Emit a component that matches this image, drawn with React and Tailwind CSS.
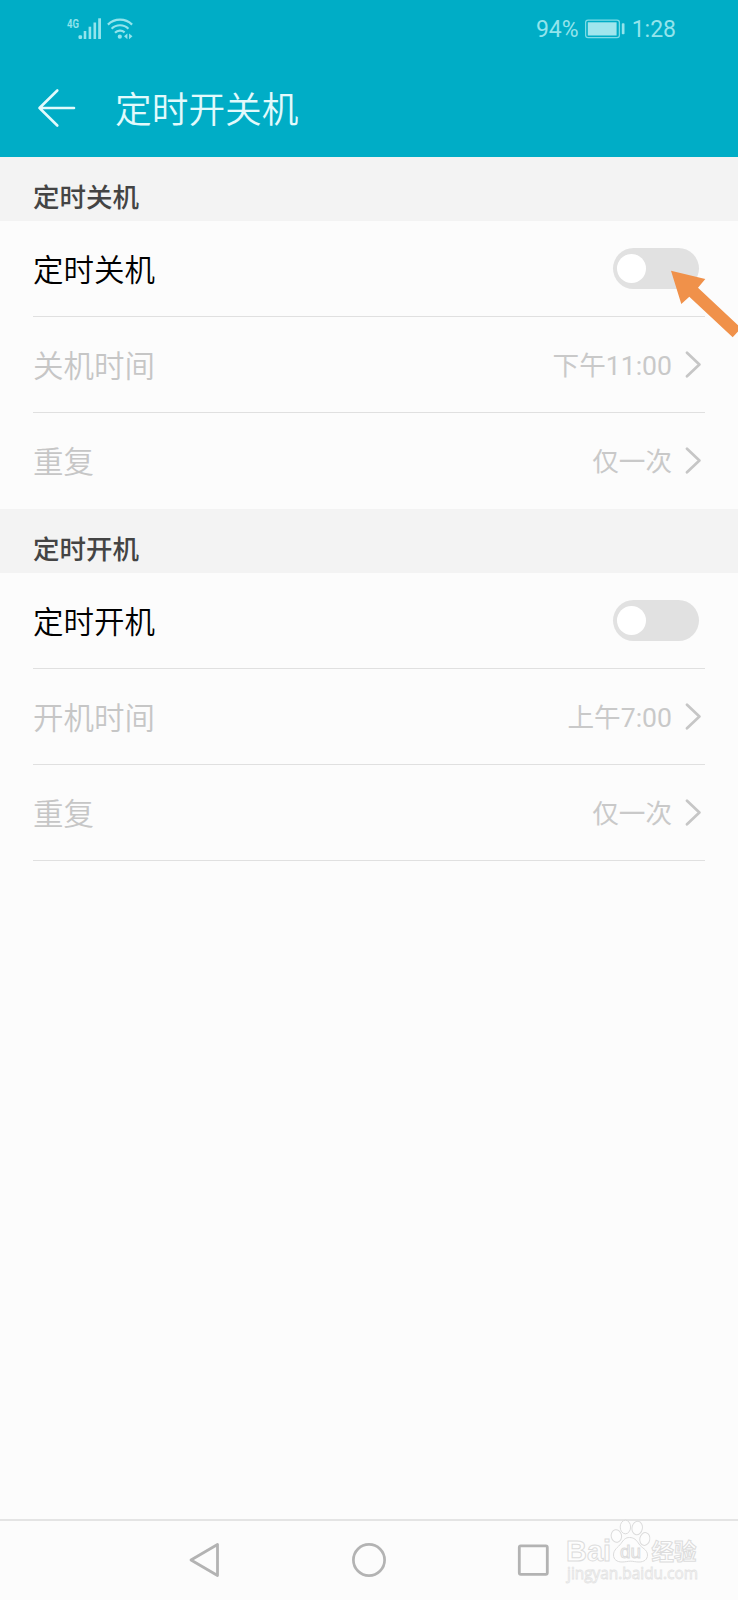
import React, { useState } from 'react';

const SECTIONS = [
    {
        title: '定时关机',
        rows: [
            { label: '定时关机', toggle: true },
            { label: '关机时间', value: '下午11:00' },
            { label: '重复', value: '仅一次', last: true },
        ],
    },
    {
        title: '定时开机',
        rows: [
            { label: '定时开机', toggle: true },
            { label: '开机时间', value: '上午7:00' },
            { label: '重复', value: '仅一次' },
        ],
    },
];

function SignalIcon() {
    return (
        <svg width="38" height="30" viewBox="64 14 38 30" fill="#93e4ec">
            <text x="67" y="28" fontSize="13.5" fontWeight="600" fontFamily="Roboto, sans-serif" textLength="12" lengthAdjust="spacingAndGlyphs">4G</text>
            <rect x="78.5" y="35.3" width="3.6" height="3.7" rx="1.2" />
            <rect x="83.7" y="31" width="2.6" height="8" />
            <rect x="88.6" y="26.7" width="2.6" height="12.3" />
            <rect x="93.5" y="22.5" width="2.6" height="16.5" />
            <rect x="98.2" y="18.3" width="2.8" height="20.7" />
        </svg>
    );
}

function WifiIcon() {
    return (
        <svg width="28" height="24" viewBox="106 17 28 24" fill="none" stroke="#93e4ec" strokeWidth="2.2">
            <path d="M107.9 24.6a17.3 17.3 0 0 1 24.2 0" />
            <path d="M111.6 28.7a12 12 0 0 1 16.8 0" />
            <path d="M115 32.7a7.2 7.2 0 0 1 9.6 -.4" />
            <circle cx="119.8" cy="36.7" r="2.1" fill="#93e4ec" stroke="none" />
            <path d="M127.4 33.4v5.8l-3.4-2.9zM129.1 33.4v5.8l3.4-2.9z" fill="#93e4ec" stroke="none" />
        </svg>
    );
}

function BatteryIcon() {
    return (
        <svg width="40" height="20" viewBox="585 19.5 40 20">
            <rect x="585.6" y="20.6" width="33.8" height="17.6" rx="2.4" fill="none" stroke="#7cdbe5" strokeWidth="1.3" />
            <rect x="587.8" y="22.8" width="28.8" height="13.2" fill="#a0e6ed" />
            <rect x="621.8" y="23.7" width="2.7" height="11" rx="0.8" fill="#93e4ec" />
        </svg>
    );
}

function StatusBar() {
    return (
        <div className="flex h-[58px] items-center pl-16 pr-[62px] font-[Roboto,sans-serif] text-[23px] text-[#93e4ec]">
            <SignalIcon />
            <div className="ml-1">
                <WifiIcon />
            </div>
            <div className="ml-auto flex items-center">
                <span className="pt-0.5">94%</span>
                <div className="ml-1.5 mr-[7px]">
                    <BatteryIcon />
                </div>
                <span className="pt-0.5">1:28</span>
            </div>
        </div>
    );
}

function Toggle({ on, onClick }) {
    return (
        <button
            type="button"
            role="switch"
            aria-checked={on}
            onClick={onClick}
            className={`mr-1.5 flex h-[41px] w-[86px] items-center rounded-full px-1 ${on ? 'justify-end bg-[#00adc6]' : 'bg-[#e1e1e1]'}`}
        >
            <span className="size-[29px] rounded-full bg-white" />
        </button>
    );
}

function Chevron() {
    return (
        <svg className="mb-px ml-[13px] mr-1" width="16" height="27" viewBox="0 0 16 27" fill="none" stroke="#c6c6c6" strokeWidth="2.7" strokeLinecap="round" strokeLinejoin="round">
            <path d="M2 1.8L14.4 13.5L2 25.2" />
        </svg>
    );
}

function Row({ label, value, toggle, last }) {
    const [on, setOn] = useState(false);
    return (
        <div className={`mx-[33px] flex h-24 items-center justify-between border-b ${last ? 'border-transparent' : 'border-[#e0e0e0]'}`}>
            <span className={`pt-[5px] text-[30.5px] font-[350] leading-none ${toggle ? 'text-black' : 'text-[#c6c6c6]'}`}>{label}</span>
            {toggle ? (
                <Toggle on={on} onClick={() => setOn(!on)} />
            ) : (
                <div className="flex items-center text-[26.6px] leading-none text-[#c9c9c9]">
                    <span className="pt-[3px]">{value}</span>
                    <Chevron />
                </div>
            )}
        </div>
    );
}

function Section({ title, rows }) {
    return (
        <section>
            <h2 className="flex h-16 items-center bg-[#f3f3f3] pl-[33px] pt-[19px] text-[26.5px] font-medium leading-none text-[#444444]">{title}</h2>
            {rows.map((row) => (
                <Row key={row.label} {...row} />
            ))}
        </section>
    );
}

// Orange hint arrow lying over the first switch
function PointerArrow() {
    return (
        <svg className="pointer-events-none absolute right-0 top-[270px]" width="67" height="69" viewBox="0 0 67 69">
            <path d="M0 .7L34.3 9L27 17.7L67 55.2V61.5L61.7 67.3L18.3 26.7L10.3 34Z" fill="#f0914a" />
        </svg>
    );
}

function Watermark() {
    return (
        <svg className="pointer-events-none absolute bottom-0 right-[34px]" width="140" height="82" viewBox="564 1518 140 82" fill="#fdfdfd" stroke="#dcdcdc" strokeWidth="1">
            <text x="566" y="1560.5" fontSize="29" fontWeight="700" fontFamily="'Liberation Sans', sans-serif" textLength="45" lengthAdjust="spacingAndGlyphs">Bai</text>
            <ellipse cx="625.4" cy="1527" rx="5.2" ry="6.8" />
            <ellipse cx="637.2" cy="1528" rx="5.2" ry="6.8" transform="rotate(10 637.2 1528)" />
            <ellipse cx="616.4" cy="1536" rx="5.2" ry="6.3" transform="rotate(-12 616.4 1536)" />
            <ellipse cx="644.8" cy="1539" rx="5" ry="6.5" transform="rotate(12 644.8 1539)" />
            <path d="M629.5 1537.5c4.5 0 7 2.5 9.5 6.5c2.5 4 8.5 5.5 8.5 11c0 4.5-3.5 7-8.5 7c-3.5 0-5.5-.8-8.5-.8s-5 .8-8.5 .8c-5 0-8.500-2.500-8.500-7c0-5.500 4.500-7.500 7.500-11.500c2.700-3.800 4.500-6 8.500-6z" />
            <text x="620" y="1558" fontSize="18.5" fontFamily="'Liberation Sans', sans-serif" textLength="21" lengthAdjust="spacingAndGlyphs">du</text>
            <text x="651.5" y="1559.5" fontSize="22.5" fontWeight="700" fontFamily="'Noto Sans CJK SC', sans-serif">经验</text>
            <text x="567" y="1578.5" fontSize="16" fontFamily="'Open Sans', sans-serif" textLength="131" lengthAdjust="spacingAndGlyphs" stroke="#e3e3e3" strokeWidth="0.8">jingyan.baidu.com</text>
        </svg>
    );
}

function NavBar() {
    return (
        <nav className="mt-auto grid h-[81px] grid-cols-3 place-items-center border-t-2 border-[#e4e4e4] px-[122px] pb-0.5">
            <svg width="34" height="36" viewBox="0 0 34 36" fill="none" stroke="#b3b3b3" strokeWidth="2.8" strokeLinejoin="round">
                <path d="M30.5 2.5V33.5L4 18Z" />
            </svg>
            <svg width="36" height="36" viewBox="0 0 36 36" fill="none" stroke="#b3b3b3" strokeWidth="2.7">
                <circle cx="18" cy="18" r="15.6" />
            </svg>
            <svg width="36" height="36" viewBox="0 0 36 36" fill="none" stroke="#b3b3b3" strokeWidth="2.8">
                <rect x="3.3" y="3.8" width="28" height="28.5" rx="1.5" />
            </svg>
        </nav>
    );
}

function App() {
    return (
        <div className="relative flex h-[1600px] w-[738px] flex-col overflow-hidden bg-[#fcfcfc] font-[Roboto,'Noto_Sans_CJK_SC',sans-serif]">
            <header className="h-[157px] bg-[#00adc6]">
                <StatusBar />
                <div className="flex h-[99px] items-center pl-[37px]">
                    <svg width="40" height="40" viewBox="0 0 40 40" fill="none" stroke="#e2fafc" strokeWidth="2.6" strokeLinecap="round" strokeLinejoin="round">
                        <path d="M20.3 2.5L2.5 20L20.3 37.5M2.5 20H37" />
                    </svg>
                    <h1 className="ml-[38px] pt-2 text-[36.7px] font-[350] leading-none text-[#e2fafc]">定时开关机</h1>
                </div>
            </header>
            <main>
                {SECTIONS.map((section) => (
                    <Section key={section.title} {...section} />
                ))}
            </main>
            <NavBar />
            <PointerArrow />
            <Watermark />
        </div>
    );
}

export default App;
